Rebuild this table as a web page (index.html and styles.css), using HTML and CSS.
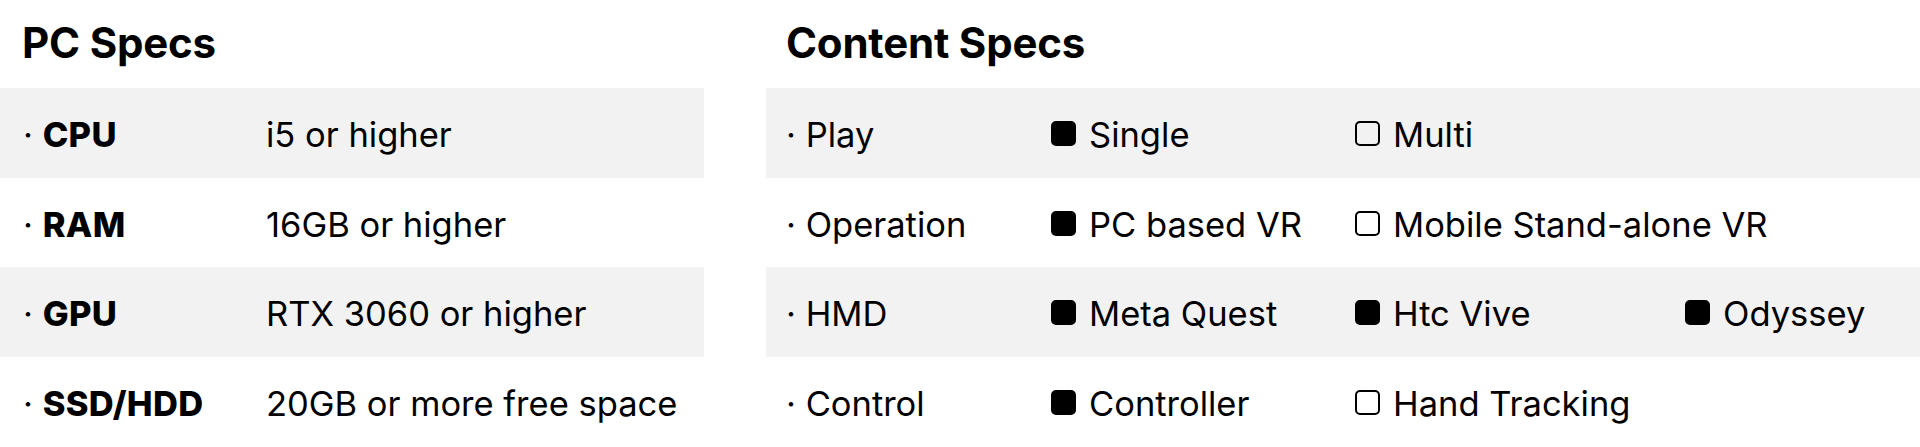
FILE: index.html
```html
<!DOCTYPE html>
<html lang="en">
<head>
<meta charset="utf-8">
<title>Specs</title>
<link rel="stylesheet" href="styles.css">
</head>
<body>
<div class="specs">
  <section class="panel panel-pc">
    <h2 class="panel-title">PC Specs</h2>
    <div class="rows">
      <div class="row"><span class="label"><span class="dot">·</span> <b>CPU</b></span><span class="value">i5 or higher</span></div>
      <div class="row"><span class="label"><span class="dot">·</span> <b>RAM</b></span><span class="value">16GB or higher</span></div>
      <div class="row"><span class="label"><span class="dot">·</span> <b>GPU</b></span><span class="value">RTX 3060 or higher</span></div>
      <div class="row"><span class="label"><span class="dot">·</span> <b>SSD/HDD</b></span><span class="value">20GB or more free space</span></div>
    </div>
  </section>
  <section class="panel panel-content">
    <h2 class="panel-title">Content Specs</h2>
    <div class="rows">
      <div class="row crow">
        <span class="label">· Play</span>
        <span class="opt"><i class="box on"></i>Single</span>
        <span class="opt"><i class="box"></i>Multi</span>
        <span class="opt"></span>
      </div>
      <div class="row crow">
        <span class="label">· Operation</span>
        <span class="opt"><i class="box on"></i>PC based VR</span>
        <span class="opt"><i class="box"></i>Mobile Stand-alone VR</span>
        <span class="opt"></span>
      </div>
      <div class="row crow">
        <span class="label">· HMD</span>
        <span class="opt"><i class="box on"></i>Meta Quest</span>
        <span class="opt"><i class="box on"></i>Htc Vive</span>
        <span class="opt"><i class="box on"></i>Odyssey</span>
      </div>
      <div class="row crow">
        <span class="label">· Control</span>
        <span class="opt"><i class="box on"></i>Controller</span>
        <span class="opt"><i class="box"></i>Hand Tracking</span>
        <span class="opt"></span>
      </div>
    </div>
  </section>
</div>
</body>
</html>
```

FILE: styles.css
```css
* { box-sizing: border-box; }
html, body {
  margin: 0;
  padding: 0;
  background: #ffffff;
}
body {
  font-family: Inter, "Noto Sans", "Liberation Sans", sans-serif;
  color: #000;
  width: 1920px;
  height: 447px;
  overflow: hidden;
}
.specs {
  display: flex;
  gap: 62px;
}
.panel-pc { width: 704px; flex: none; }
.panel-content { flex: 1; }
.panel-title {
  margin: 0;
  font-size: 42px;
  font-weight: 700;
  line-height: 42px;
  height: 88px;
  padding-top: 22px;
  letter-spacing: -0.2px;
}
.panel-pc .panel-title { padding-left: 22px; }
.panel-content .panel-title { padding-left: 20px; }
.rows { display: flex; flex-direction: column; }
.row {
  height: 89.5px;
  padding-top: 4px;
  display: flex;
  align-items: center;
  font-size: 34.5px;
  font-weight: 400;
  white-space: nowrap;
}
.row:nth-child(odd) { background: #f2f2f2; }
.panel-pc .row { padding-left: 23px; }
.panel-pc .label { width: 243px; flex: none; }
.label b { font-weight: 800; letter-spacing: 0.3px; }
.panel-content .row { padding-left: 20px; }
.crow {
  display: grid;
  grid-template-columns: 265px 304px 330px 1fr;
  align-items: center;
}
.opt {
  display: flex;
  align-items: center;
}
.box {
  width: 25px;
  height: 25px;
  border: 2.5px solid #000;
  border-radius: 5px;
  margin-right: 13px;
  flex: none;
  position: relative;
  top: -1px;
}
.box.on { background: #000; }
```
